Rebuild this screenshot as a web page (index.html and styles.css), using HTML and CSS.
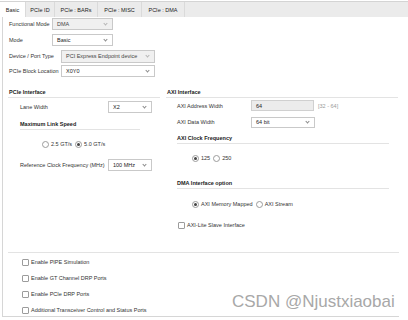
FILE: index.html
```html
<!DOCTYPE html>
<html lang="en">
<head>
  <meta charset="UTF-8" />
  <title>DMA/Bridge Subsystem - Basic</title>
  <link rel="stylesheet" href="styles.css">
</head>
<body>

<div class="tabs">
  <div class="tab t1 active">Basic</div>
  <div class="tab t2">PCIe ID</div>
  <div class="tab t3">PCIe : BARs</div>
  <div class="tab t4">PCIe : MISC</div>
  <div class="tab t5">PCIe : DMA</div>
</div>

<div class="panel">
  <div class="top-form">
    <div class="field">
      <span class="lbl lw-a">Functional Mode</span>
      <div class="select disabled sw-a">DMA</div>
    </div>
    <div class="field">
      <span class="lbl lw-a">Mode</span>
      <div class="select sw-a">Basic</div>
    </div>
    <div class="field">
      <span class="lbl lw-b">Device / Port Type</span>
      <div class="select disabled sw-b tall">PCI Express Endpoint device</div>
    </div>
    <div class="field r4">
      <span class="lbl lw-b">PCIe Block Location</span>
      <div class="select sw-b">X0Y0</div>
    </div>
  </div>

  <div class="cols">
    <div class="col col-left">
      <div class="sec-head">PCIe Interface</div>
      <div class="field lane">
        <span class="lbl lw-c">Lane Width</span>
        <div class="select sw-c">X2</div>
      </div>
      <div class="sub-head speed">Maximum Link Speed</div>
      <div class="radios speed-opts">
        <span class="radio"></span><span>2.5 GT/s</span>
        <span class="radio on"></span><span>5.0 GT/s</span>
      </div>
      <div class="field refclk">
        <span class="lbl lw-c">Reference Clock Frequency (MHz)</span>
        <div class="select sw-c">100 MHz</div>
      </div>
    </div>

    <div class="col col-right">
      <div class="sec-head">AXI Interface</div>
      <div class="field addr">
        <span class="lbl lw-d">AXI Address Width</span>
        <div class="input">64</div>
        <span class="range">[32 - 64]</span>
      </div>
      <div class="field data">
        <span class="lbl lw-d">AXI Data Width</span>
        <div class="select sw-d">64 bit</div>
      </div>
      <div class="sub-head clk">AXI Clock Frequency</div>
      <div class="radios clk-opts">
        <span class="radio on"></span><span>125</span>
        <span class="radio"></span><span>250</span>
      </div>
      <div class="sub-head dma">DMA Interface option</div>
      <div class="radios dma-opts">
        <span class="radio on"></span><span>AXI Memory Mapped</span>
        <span class="radio"></span><span>AXI Stream</span>
      </div>
      <div class="check-row lite">
        <span class="check"></span><span>AXI-Lite Slave Interface</span>
      </div>
    </div>
  </div>

  <div class="options">
    <div class="check-row"><span class="check"></span><span>Enable PIPE Simulation</span></div>
    <div class="check-row"><span class="check"></span><span>Enable GT Channel DRP Ports</span></div>
    <div class="check-row"><span class="check"></span><span>Enable PCIe DRP Ports</span></div>
    <div class="check-row"><span class="check"></span><span>Additional Transceiver Control and Status Ports</span></div>
  </div>
</div>

<div class="watermark">CSDN @Njustxiaobai</div>

</body>
</html>
```

FILE: styles.css
```css
body {
  margin: 0;
  position: relative;
  width: 408px;
  height: 320px;
  overflow: hidden;
  font-family: "Liberation Sans", Arial, sans-serif;
  font-size: 5.5px;
  color: #333;
  background: #fff;
}

/* tab strip */
.tabs {
  display: flex;
  margin-top: 1px;
  height: 15px;
  border-top: 1px solid #d4d4d4;
  background: #ebebeb;
}
.tab {
  display: flex;
  align-items: center;
  justify-content: center;
  box-sizing: border-box;
  border-right: 1px solid #dadada;
  color: #222;
}
.t1 { width: 26px; }
.t2 { width: 29px; }
.t3 { width: 43px; }
.t4 { width: 44px; }
.t5 { width: 43px; }
.tab.active {
  background: #fff;
}

/* main panel */
.panel {
  margin-left: 2px;
  width: 396px;
  height: 299px;
  border-left: 1px solid #d6d6d6;
  border-bottom: 1px solid #d6d6d6;
}

.field {
  display: flex;
  align-items: center;
  height: 12px;
}
.lbl {
  flex: none;
  white-space: nowrap;
}
.lw-a { width: 43px; }
.lw-b { width: 52px; }
.lw-c { width: 88px; }
.lw-d { width: 74px; }

.select, .input {
  display: flex;
  align-items: center;
  justify-content: space-between;
  box-sizing: border-box;
  height: 12px;
  padding: 0 5px 0 4px;
  border: 1px solid #c9c9c9;
  background: #fff;
  color: #222;
  white-space: nowrap;
}
.select::after {
  content: "";
  width: 2px;
  height: 2px;
  margin-top: -2px;
  border-right: 1px solid #8a8a8a;
  border-bottom: 1px solid #8a8a8a;
  transform: rotate(45deg);
}
.select.disabled {
  background: #f0f0f0;
  color: #444;
}
.select.disabled::after {
  border-color: #b5b5b5;
}
.select.tall { height: 13px; }
.sw-a { width: 61px; }
.sw-b { width: 94px; }
.sw-c { width: 44px; }
.sw-d { width: 64px; }

.input {
  width: 63px;
  background: #ececec;
  border-color: #d0d0d0;
}
.range {
  margin-left: 4px;
  color: #9a9a9a;
}

/* top rows */
.top-form {
  padding: 1px 0 0 6px;
}
.top-form .field + .field { margin-top: 4px; }
.top-form .field.r4 { margin-top: 3px; }

/* two columns */
.cols {
  display: flex;
  gap: 6px;
  box-sizing: border-box;
  height: 175px;
  padding: 10px 0 0 5px;
}
.col-left { width: 152px; }
.col-right { width: 232px; }

.sec-head, .sub-head {
  box-sizing: border-box;
  height: 11px;
  line-height: 10px;
  padding-left: 1px;
  font-weight: bold;
  color: #222;
  border-bottom: 1px solid #e3e3e3;
}
.sub-head {
  height: 10px;
  line-height: 9px;
  padding-left: 0;
}

.col-left .field, .col-left .sub-head { margin-left: 12px; }
.lane { margin-top: 3px; }
.speed { width: 120px; margin-top: 7px; }
.speed-opts { margin: 10px 0 0 34px; }
.refclk { margin-top: 11px; }

.col-right .field { margin-left: 11px; }
.addr { margin-top: 2px; height: 11px; }
.addr .input { height: 11px; }
.data { margin-top: 5px; }
.data .select { height: 11px; }
.col-right .sub-head { margin-left: 11px; width: 212px; }
.clk { margin-top: 6px; }
.clk-opts { margin: 10px 0 0 26px; }
.dma { margin-top: 17px; }
.dma-opts { margin: 11px 0 0 26px; }
.lite { margin: 13px 0 0 12px; }

/* radios and checkboxes */
.radios, .check-row {
  display: flex;
  align-items: center;
  height: 8px;
  white-space: nowrap;
}
.radio {
  position: relative;
  box-sizing: border-box;
  width: 7px;
  height: 7px;
  margin-right: 2px;
  border: 1px solid #9c9c9c;
  border-radius: 50%;
  background: #fff;
}
.radio ~ .radio { margin-left: 3px; }
.radio.on::after {
  content: "";
  position: absolute;
  left: 1px;
  top: 1px;
  width: 3px;
  height: 3px;
  border-radius: 50%;
  background: #444;
}
.check {
  box-sizing: border-box;
  width: 7px;
  height: 7px;
  margin-right: 2px;
  border: 1px solid #9c9c9c;
  border-radius: 1px;
  background: #fff;
}

/* bottom options */
.options {
  margin-left: 5px;
  padding: 5px 0 0 14px;
  border-top: 1px solid #e3e3e3;
}
.options .check-row + .check-row { margin-top: 8px; }

.watermark {
  position: absolute;
  left: 232px;
  top: 292px;
  font-size: 17px;
  color: #a8a8a8;
  white-space: nowrap;
}
```
